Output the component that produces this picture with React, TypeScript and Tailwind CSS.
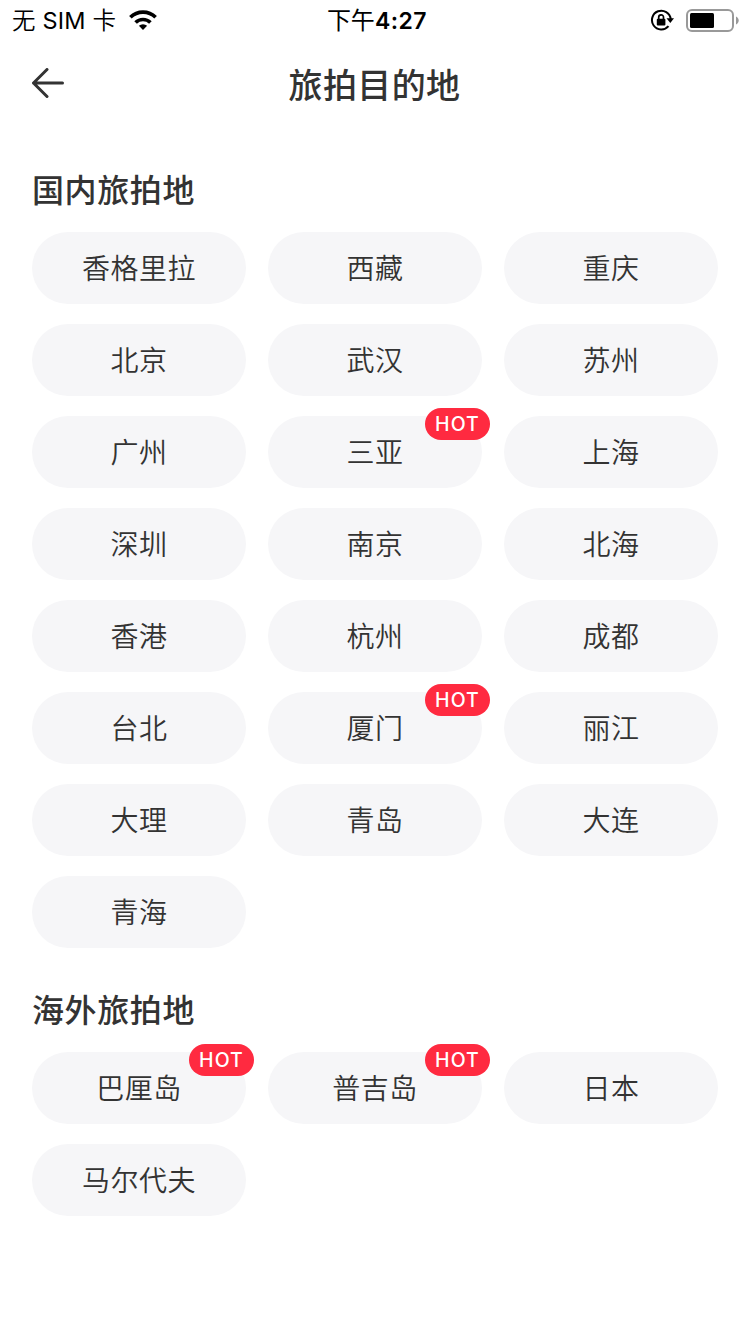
import React from "react";

type City = { name: string; hot?: boolean };

const domestic: City[] = [
  { name: "香格里拉" }, { name: "西藏" }, { name: "重庆" },
  { name: "北京" }, { name: "武汉" }, { name: "苏州" },
  { name: "广州" }, { name: "三亚", hot: true }, { name: "上海" },
  { name: "深圳" }, { name: "南京" }, { name: "北海" },
  { name: "香港" }, { name: "杭州" }, { name: "成都" },
  { name: "台北" }, { name: "厦门", hot: true }, { name: "丽江" },
  { name: "大理" }, { name: "青岛" }, { name: "大连" },
  { name: "青海" },
];

const overseas: City[] = [
  { name: "巴厘岛", hot: true }, { name: "普吉岛", hot: true }, { name: "日本" },
  { name: "马尔代夫" },
];

function StatusBar() {
  return (
    <div className="grid h-10 grid-cols-3 grid-rows-[40px] items-center text-black">
      <div className="flex h-10 items-center pl-3">
        <span className="whitespace-nowrap pt-px text-[23.5px] font-[350] leading-[38px] tracking-[0.2px]">无 <span className="font-normal">SIM</span> 卡</span>
        <svg className="ml-[13px] h-5 w-7" viewBox="0 0 28 20">
          <path d="M14 20l4.1-4.2a6 6 0 0 0-8.2 0z" />
          <path d="M6.6 12.5a10.6 10.6 0 0 1 14.8 0M1.4 7.2a18 18 0 0 1 25.2 0" fill="none" stroke="#000" strokeWidth="3.7" />
        </svg>
      </div>
      <div className="h-10 pl-1 pt-px text-center text-[24px] leading-[39px]">下午<span className="text-[23px] font-semibold tracking-[0.5px]">4:27</span></div>
      <div className="flex h-10 items-center justify-end pr-[11px]">
        <svg className="mr-3 h-6 w-6" viewBox="0 0 24 24" fill="none" stroke="#000" strokeWidth="2">
          <path d="M18.5 18.2A9.4 9.4 0 1 1 20.7 11" />
          <path d="M16.5 10.3H24L20.3 15z" fill="#000" stroke="none" />
          <rect x="6.8" y="10.8" width="8.6" height="6.8" rx="1" fill="#000" stroke="none" />
          <path d="M8.7 11.5V9.2a2.4 2.4 0 0 1 4.8 0v2.3" strokeWidth="1.7" />
        </svg>
        <svg className="h-6 w-[53px]" viewBox="0 0 53 24">
          <rect x="1" y="2" width="46" height="21" rx="5" fill="none" stroke="#999" strokeWidth="2" />
          <rect x="4" y="5" width="24" height="15" rx="1.5" />
          <path d="M50 8.5c3.6 1.5 3.6 6.5 0 8z" fill="#999" />
        </svg>
      </div>
    </div>
  );
}

function CityGrid({ cities }: { cities: City[] }) {
  return (
    <div className="grid grid-cols-3 gap-x-[22px] gap-y-5">
      {cities.map((city) => (
        <button key={city.name} className="relative flex h-18 items-center justify-center rounded-full bg-[#f6f6f8] pt-0.5 text-[28px] font-[350] tracking-[0.5px]">
          <span>{city.name}</span>
          {city.hot && (
            <span className="absolute -right-2 -top-2 flex h-8 w-[65px] items-center justify-center rounded-full bg-[#ff2a40] pt-px font-[Inter] text-[19.5px] font-medium tracking-[1.1px] text-white">
              HOT
            </span>
          )}
        </button>
      ))}
    </div>
  );
}

export default function App() {
  return (
    <div className="min-h-[1334px] w-[750px] bg-white font-[Inter,'Noto_Sans_CJK_SC',sans-serif] text-[#333]">
      <StatusBar />
      <header className="grid h-[88px] grid-cols-[64px_1fr_64px] items-center">
        <svg className="mb-px ml-8 h-8 w-8" viewBox="0 0 32 32" fill="none" stroke="#333" strokeWidth="3" strokeLinecap="round" strokeLinejoin="round">
          <path d="M15 1.5L1.5 15 15 28.5M1.5 15H30.5" />
        </svg>
        <h1 className="pt-0.5 pr-px text-center text-[34px] font-medium tracking-[0.4px]">旅拍目的地</h1>
      </header>
      <main className="px-8">
        <h2 className="mt-[38px] mb-[18px] h-12 pt-px text-[32px] font-medium leading-12 tracking-[0.6px]">国内旅拍地</h2>
        <CityGrid cities={domestic} />
        <h2 className="mt-[38px] mb-[18px] h-12 pt-px text-[32px] font-medium leading-12 tracking-[0.6px]">海外旅拍地</h2>
        <CityGrid cities={overseas} />
      </main>
    </div>
  );
}
